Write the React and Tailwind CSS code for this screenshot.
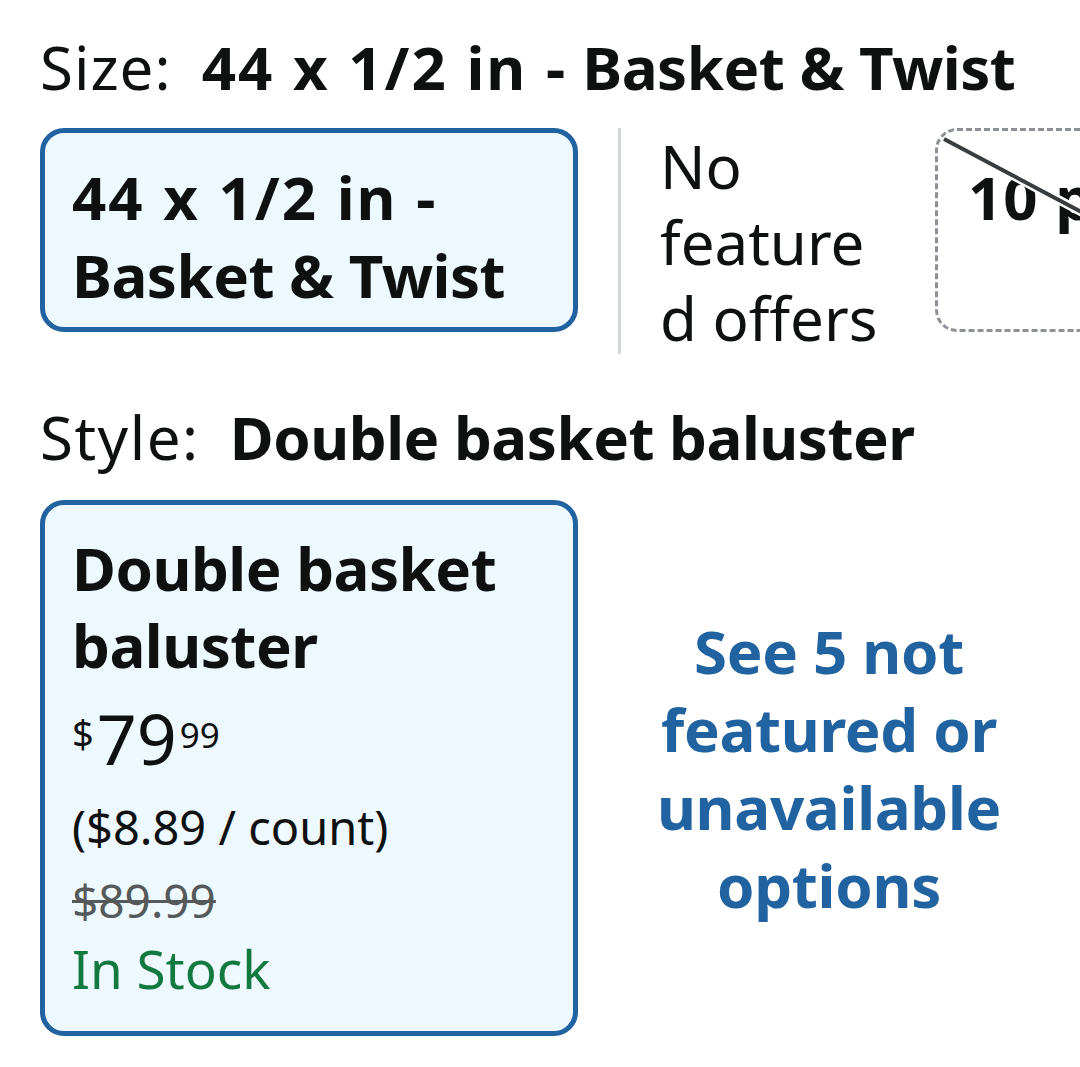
export default function App() {
  return (
    <div className="w-[1080px] h-[1067px] overflow-hidden bg-white text-[#0f1111] font-['Noto_Sans',sans-serif]">
      <div className="pl-[40px] pt-[28px]">
        <div className="text-[60px] leading-[78px] whitespace-nowrap">
          <span className="tracking-[1px]">Size:</span>
          <span className="font-bold tracking-[-0.5px]">
            {"\u00a0 "}
            <span className="tracking-[2px] [word-spacing:1px]">44 x 1/2 in -</span>
            {" Basket & Twist"}
          </span>
        </div>

        <div className="mt-[22px] flex items-start">
          <div className="w-[538px] h-[204px] shrink-0 rounded-[24px] border-[5px] border-[#2162a1] bg-[#edf8ff] pl-[27px] pt-[25px]">
            <div className="text-[60px] leading-[78px] font-bold tracking-[-0.5px]">
              <span className="tracking-[2px] [word-spacing:1px]">44 x 1/2 in -</span>
              <br />Basket &amp; Twist
            </div>
          </div>
          <div className="ml-[40px] w-[3px] h-[226px] shrink-0 bg-[#d5d9d9]" />
          <div className="ml-[39px] w-[235px] shrink-0 text-[60px] leading-[76px]">
            No<br />feature<br />d offers
          </div>
          <div className="relative ml-[40px] w-[300px] h-[204px] shrink-0 rounded-[22px] border-[3px] border-dashed border-[#8d9096] pl-[30px] pt-[27px] overflow-hidden">
            <div className="text-[60px] leading-[78px] font-bold whitespace-nowrap tracking-[1px]">10 pack</div>
            <svg className="absolute left-0 top-0" width="300" height="204" viewBox="0 0 300 204">
              <line x1="6" y1="8" x2="300" y2="164" stroke="#ffffff" strokeWidth="9" />
              <line x1="6" y1="8" x2="300" y2="164" stroke="#3a3d40" strokeWidth="4" />
            </svg>
          </div>
        </div>

        <div className="mt-[42px] text-[60px] leading-[78px] whitespace-nowrap">
          <span className="tracking-[1.5px]">Style:</span>
          <span className="font-bold tracking-[-0.5px]">{"\u00a0 Double basket baluster"}</span>
        </div>

        <div className="mt-[24px] flex items-stretch">
          <div className="w-[538px] h-[536px] shrink-0 rounded-[24px] border-[5px] border-[#2162a1] bg-[#edf8ff] pl-[27px] pt-[25px]">
            <div className="text-[60px] leading-[77px] font-bold tracking-[-0.5px]">
              Double basket<br />baluster
            </div>
            <div className="mt-[14px] flex items-start leading-none">
              <span className="text-[38px] mt-[16px]">$</span>
              <span className="text-[70px] leading-[80px] ml-[3px]">79</span>
              <span className="text-[35px] mt-[19px] ml-[3px]">99</span>
            </div>
            <div className="mt-[12px] text-[47px] leading-[74px]">($8.89 / count)</div>
            <div className="text-[46px] leading-[72px] text-[#565959] line-through decoration-[3px]">$89.99</div>
            <div className="-mt-[5px] text-[53px] leading-[76px] text-[#137a3f]">In Stock</div>
          </div>
          <div className="flex-1 flex items-center justify-center">
            <div className="text-center text-[60px] leading-[78px] font-bold text-[#2162a1] tracking-[-0.3px]">
              See 5 not<br />featured or<br />unavailable<br />options
            </div>
          </div>
        </div>
      </div>
    </div>
  );
}
